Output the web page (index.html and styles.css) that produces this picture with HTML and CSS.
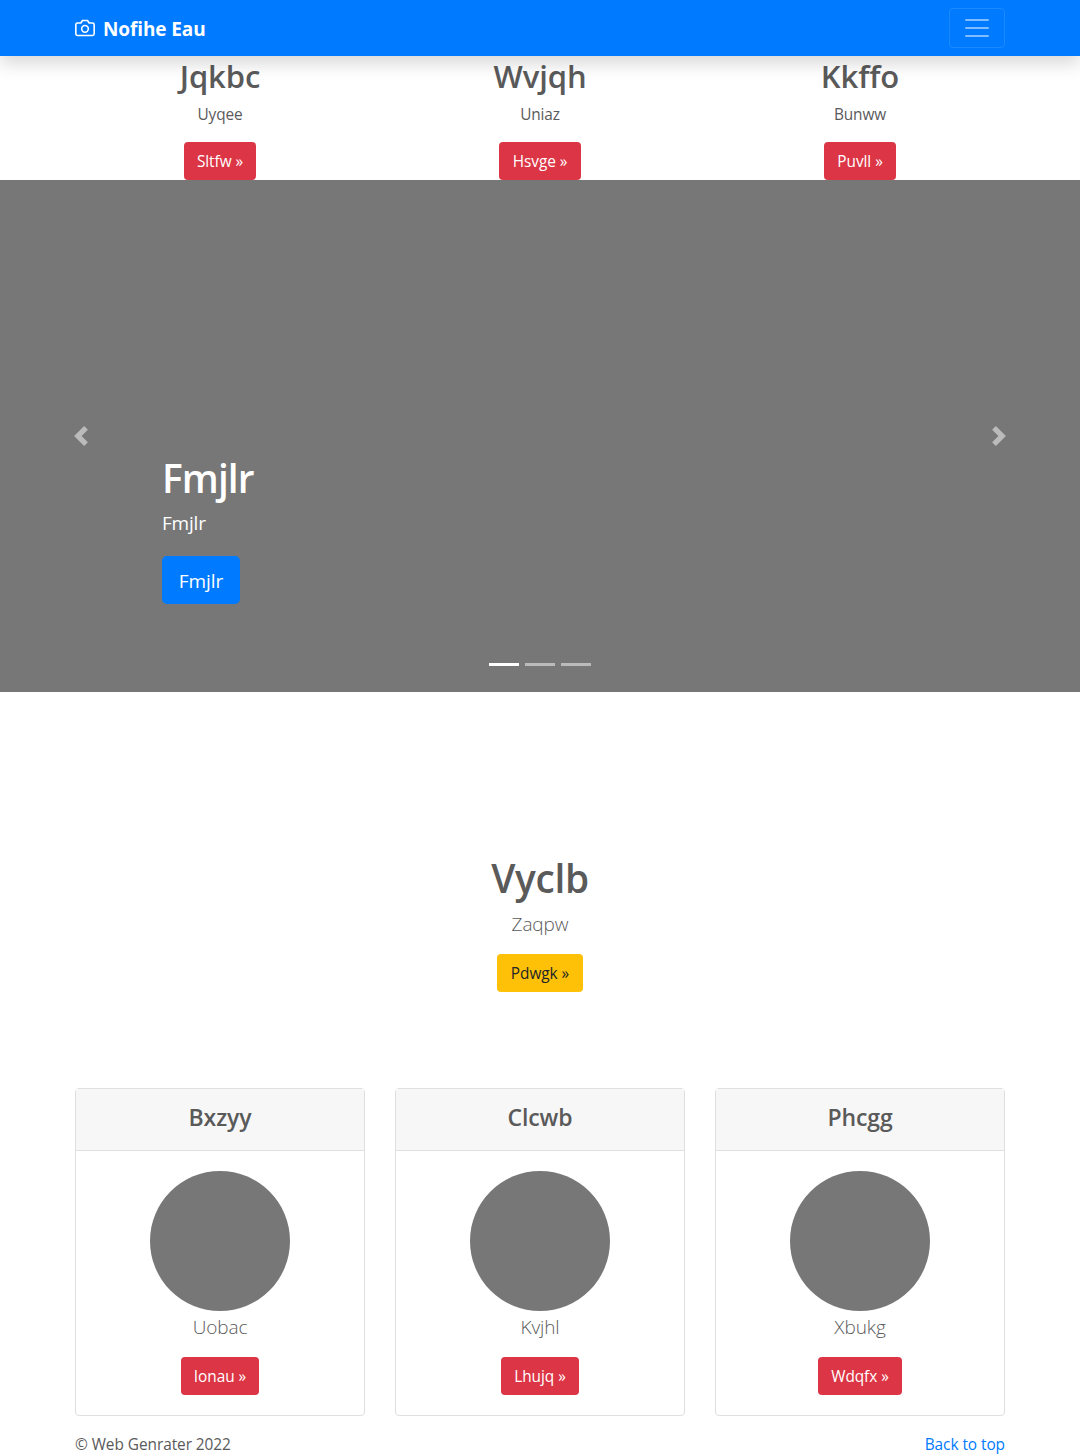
FILE: index.html
```html
<!DOCTYPE html>
<html lang="en">
<head>
<meta charset="utf-8">
<title>Nofihe Eau</title>
<link rel="stylesheet" href="styles.css">
</head>
<body>
<header class="navbar">
  <div class="container navbar-inner">
    <a class="brand" href="#">
      <svg class="brand-icon" width="20" height="20" viewBox="0 0 24 24" fill="none" stroke="currentColor" stroke-width="2" stroke-linecap="round" stroke-linejoin="round" aria-hidden="true"><path d="M23 19a2 2 0 0 1-2 2H3a2 2 0 0 1-2-2V8a2 2 0 0 1 2-2h4l2-3h6l2 3h4a2 2 0 0 1 2 2z"/><circle cx="12" cy="13" r="4"/></svg>
      <strong>Nofihe Eau</strong>
    </a>
    <button class="toggler" aria-label="Toggle navigation">
      <svg width="30" height="30" viewBox="0 0 30 30" stroke="rgba(255,255,255,.5)" stroke-width="2" stroke-linecap="round"><path d="M4 7h22M4 15h22M4 23h22"/></svg>
    </button>
  </div>
</header>
<main>
  <div class="container columns">
    <div class="column"><h2>Jqkbc</h2><p>Uyqee</p><a class="btn danger w72" href="#">Sltfw »</a></div>
    <div class="column"><h2>Wvjqh</h2><p>Uniaz</p><a class="btn danger w82" href="#">Hsvge »</a></div>
    <div class="column"><h2>Kkffo</h2><p>Bunww</p><a class="btn danger w72" href="#">Puvll »</a></div>
  </div>
  <section class="carousel">
    <a class="control" href="#" aria-label="Previous"><svg width="20" height="20" viewBox="0 0 8 8" fill="#fff"><path d="M5.25 0l-4 4 4 4 1.5-1.5L4.25 4l2.5-2.5L5.25 0z"/></svg></a>
    <div class="slide">
      <div class="caption"><h1>Fmjlr</h1><p>Fmjlr</p><a class="btn large" href="#">Fmjlr</a></div>
      <div class="indicators"><i class="active"></i><i></i><i></i></div>
    </div>
    <a class="control" href="#" aria-label="Next"><svg width="20" height="20" viewBox="0 0 8 8" fill="#fff"><path d="M2.75 0l-1.5 1.5L3.75 4l-2.5 2.5L2.75 8l4-4-4-4z"/></svg></a>
  </section>
  <section class="intro"><h1>Vyclb</h1><p class="lead">Zaqpw</p><a class="btn warning" href="#">Pdwgk »</a></section>
  <div class="container cards">
    <article class="card"><div class="card-header"><h4>Bxzyy</h4></div><div class="card-body"><div class="avatar"></div><p class="lead">Uobac</p><a class="btn danger w78" href="#">Ionau »</a></div></article>
    <article class="card"><div class="card-header"><h4>Clcwb</h4></div><div class="card-body"><div class="avatar"></div><p class="lead">Kvjhl</p><a class="btn danger w78" href="#">Lhujq »</a></div></article>
    <article class="card"><div class="card-header"><h4>Phcgg</h4></div><div class="card-body"><div class="avatar"></div><p class="lead">Xbukg</p><a class="btn danger w84" href="#">Wdqfx »</a></div></article>
  </div>
</main>
<footer class="container footer"><span>© Web Genrater 2022</span><a href="#">Back to top</a></footer>
</body>
</html>
```
FILE: styles.css
```css
* { box-sizing: border-box; }
html { overflow: hidden; }
body { margin: 0; color: #5a5a5a; background: #fff; font: 400 15.4px/24px "Segoe UI", "Open Sans", "Noto Sans", sans-serif; letter-spacing: -.05px; }
h1, h2, h4, p { margin: 0; }
h1, h2, h4 { font-weight: 600; margin-bottom: 8px; }
h1 { font-size: 38.8px; line-height: 48px; letter-spacing: -.3px; }
h2 { font-size: 31px; line-height: 38px; padding-top: 1px; letter-spacing: -.1px; }
h4 { font-size: 23px; line-height: 29px; padding-top: 2px; letter-spacing: -.1px; }
p { margin-bottom: 16px; }
a { color: #007bff; text-decoration: none; }
svg { display: block; }
.container { width: 960px; margin: 0 auto; padding: 0 15px; }
.navbar { position: relative; height: 56px; background: #007bff; box-shadow: 0 8px 16px rgba(0,0,0,.15); }
.navbar-inner { height: 56px; display: flex; align-items: center; justify-content: space-between; }
.brand { display: flex; align-items: center; gap: 8px; color: #fff; font-size: 19px; line-height: 30px; letter-spacing: -.1px; }
.brand strong { padding-top: 2px; }
.brand-icon { stroke-width: 1.9; }
.toggler { width: 56px; height: 40px; padding: 0 12px; border: 1px solid rgba(255,255,255,.1); border-radius: 4px; background: transparent; }
.columns { display: grid; grid-template-columns: repeat(3, 1fr); gap: 30px; height: 124px; }
.column { display: flex; flex-direction: column; align-items: center; height: 124px; }
.column h2 { height: 38px; }
.column p { padding-top: 1px; margin-bottom: 15px; letter-spacing: -.15px; }
.btn { display: inline-flex; align-items: center; justify-content: center; height: 38px; padding-top: 2px; border-radius: 4px; color: #fff; white-space: nowrap; flex-shrink: 0; }
.danger { background: #dc3545; }
.warning { width: 86px; background: #ffc107; color: #212529; }
.w72 { width: 72px; }
.w78 { width: 78px; }
.w82 { width: 82px; }
.w84 { width: 84px; }
.carousel { display: flex; height: 512px; background: #777; color: #fff; }
.control { width: 162px; display: flex; align-items: center; justify-content: center; opacity: .5; }
.slide { flex: 1; display: flex; flex-direction: column; justify-content: space-between; padding: 274px 0 26px; }
.caption h1 { margin-bottom: 7px; letter-spacing: -.9px; }
.caption p { font-size: 19px; line-height: 28px; margin-bottom: 19px; letter-spacing: -.2px; }
.large { width: 78px; height: 48px; border-radius: 5px; font-size: 19px; letter-spacing: -.1px; background: #007bff; }
.indicators { display: flex; justify-content: center; gap: 6px; }
.indicators i { width: 30px; height: 3px; background: #fff; opacity: .5; }
.indicators .active { opacity: 1; }
.intro { height: 396px; padding-top: 162px; display: flex; flex-direction: column; align-items: center; }
.intro h1 { margin-bottom: 7px; }
.lead { font-size: 19px; line-height: 30px; font-weight: 300; letter-spacing: -.1px; }
.intro .lead { margin-bottom: 15px; }
.cards { display: grid; grid-template-columns: repeat(3, 1fr); gap: 30px; }
.card { height: 328px; border: 1px solid #dfdfdf; border-radius: 4px; }
.card-header { height: 62px; padding-top: 12px; border-bottom: 1px solid #dfdfdf; background: #f7f7f7; text-align: center; }
.card-body { display: flex; flex-direction: column; align-items: center; padding: 20px 0; }
.card-body .lead { padding-top: 1px; margin-bottom: 15px; }
.avatar { width: 140px; height: 140px; border-radius: 50%; background: #777; }
.footer { display: flex; justify-content: space-between; padding-top: 17px; }
```
